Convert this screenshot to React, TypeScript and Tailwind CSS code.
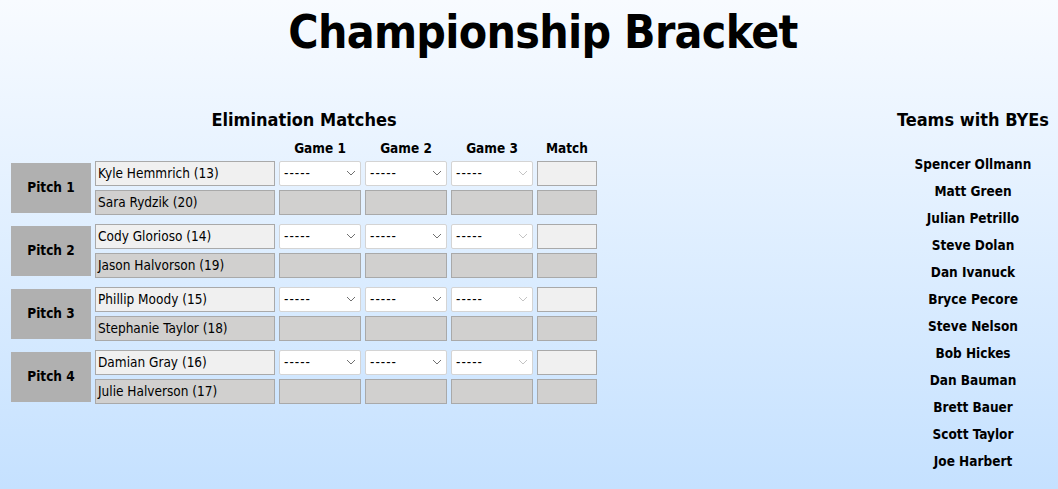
import React from "react";

const matches = [
  { pitch: "Pitch 1", top: "Kyle Hemmrich (13)", bottom: "Sara Rydzik (20)" },
  { pitch: "Pitch 2", top: "Cody Glorioso (14)", bottom: "Jason Halvorson (19)" },
  { pitch: "Pitch 3", top: "Phillip Moody (15)", bottom: "Stephanie Taylor (18)" },
  { pitch: "Pitch 4", top: "Damian Gray (16)", bottom: "Julie Halverson (17)" },
];

const byes = [
  "Spencer Ollmann",
  "Matt Green",
  "Julian Petrillo",
  "Steve Dolan",
  "Dan Ivanuck",
  "Bryce Pecore",
  "Steve Nelson",
  "Bob Hickes",
  "Dan Bauman",
  "Brett Bauer",
  "Scott Taylor",
  "Joe Harbert",
];

const font = { fontFamily: '"DejaVu Sans Condensed", "DejaVu Sans", sans-serif' };

const GameSelect = ({ faded }: { faded?: boolean }) => (
  <div className="w-[82px] h-[25px] flex items-center justify-between bg-white border border-[#d4d4d4] rounded-[2px] pl-[4px] pr-[4px]">
    <span className="text-[13.5px] text-black leading-none pt-[2px] tracking-[1px]">-----</span>
    <svg width="10" height="6" viewBox="0 0 10 6" fill="none">
      <path
        d="M1 1 L5 5 L9 1"
        stroke={faded ? "#c4c4c4" : "#707070"}
        strokeWidth="1"
      />
    </svg>
  </div>
);

const Cell = ({ w, light, children }: { w: string; light?: boolean; children?: React.ReactNode }) => (
  <div
    className={`${w} h-[25px] flex items-center border border-[#a9a9a9] pl-[2px] text-[13.5px] text-black ${
      light ? "bg-[#f0f0f0]" : "bg-[#d1d0cf]"
    }`}
  >
    {children}
  </div>
);

export default function App() {
  return (
    <div
      className="w-[1058px] h-[489px] overflow-hidden bg-gradient-to-b from-[#f8fbff] to-[#c5e1ff] text-black"
      style={font}
    >
      <h1 className="text-[46px] font-bold text-center leading-none pt-[9px] pl-[28px] tracking-[-0.7px]">
        Championship Bracket
      </h1>

      <div className="flex justify-between mt-[56px]">
        <div className="pl-[11px] w-[597px]">
          <h2 className="text-[18px] font-bold text-center leading-none">Elimination Matches</h2>

          <div className="flex gap-[4px] pl-[268px] mt-[13px] text-[13.5px] font-bold leading-none">
            <div className="w-[82px] text-center">Game 1</div>
            <div className="w-[82px] text-center">Game 2</div>
            <div className="w-[82px] text-center">Game 3</div>
            <div className="w-[60px] text-center">Match</div>
          </div>

          <div className="flex flex-col gap-[9px] mt-[5px]">
            {matches.map((m) => (
              <div key={m.pitch} className="flex gap-[4px] items-center">
                <div className="w-[80px] h-[50px] bg-[#b0b0b0] flex items-center justify-center text-[13.5px] font-bold">
                  {m.pitch}
                </div>
                <div className="flex flex-col gap-[4px]">
                  <div className="flex gap-[4px]">
                    <Cell w="w-[180px]" light>
                      {m.top}
                    </Cell>
                    <GameSelect />
                    <GameSelect />
                    <GameSelect faded />
                    <Cell w="w-[60px]" light />
                  </div>
                  <div className="flex gap-[4px]">
                    <Cell w="w-[180px]">{m.bottom}</Cell>
                    <Cell w="w-[82px]" />
                    <Cell w="w-[82px]" />
                    <Cell w="w-[82px]" />
                    <Cell w="w-[60px]" />
                  </div>
                </div>
              </div>
            ))}
          </div>
        </div>

        <div className="w-[170px]">
          <h2 className="text-[18px] font-bold text-center leading-none">Teams with BYEs</h2>
          <ul className="mt-[27px] flex flex-col gap-[11px]">
            {byes.map((b) => (
              <li key={b} className="text-[13.5px] font-bold text-center leading-[16px]">
                {b}
              </li>
            ))}
          </ul>
        </div>
      </div>
    </div>
  );
}
